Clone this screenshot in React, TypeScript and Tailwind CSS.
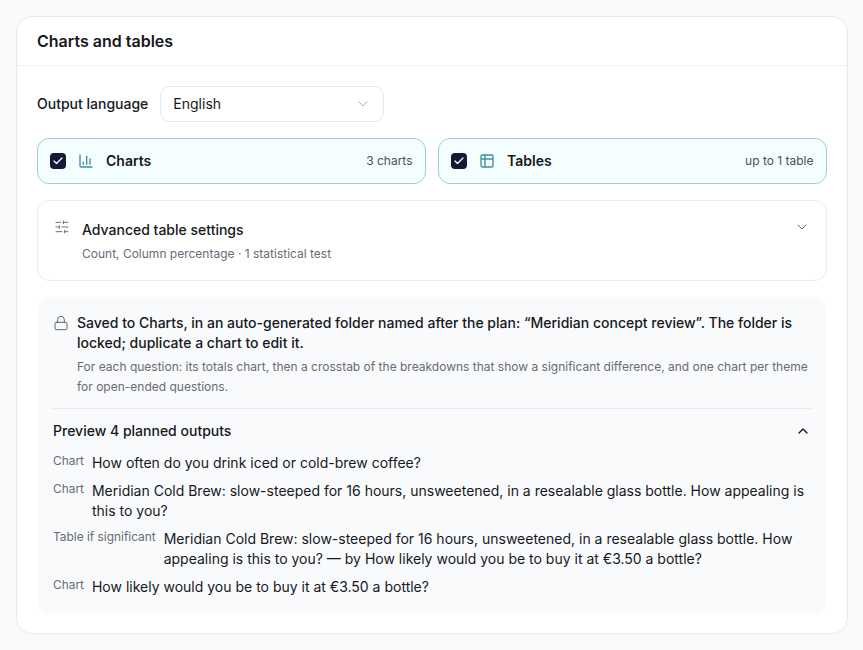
import { Check, ChevronDown, ChevronUp, Lock, SlidersHorizontal, Table2 } from 'lucide-react'
import type { ReactNode } from 'react'

type Output = { kind: string; text: string }

const outputs: Output[] = [
  { kind: 'Chart', text: 'How often do you drink iced or cold-brew coffee?' },
  {
    kind: 'Chart',
    text: 'Meridian Cold Brew: slow-steeped for 16 hours, unsweetened, in a resealable glass bottle. How appealing is this to you?',
  },
  {
    kind: 'Table if significant',
    text: 'Meridian Cold Brew: slow-steeped for 16 hours, unsweetened, in a resealable glass bottle. How appealing is this to you? — by How likely would you be to buy it at €3.50 a bottle?',
  },
  { kind: 'Chart', text: 'How likely would you be to buy it at €3.50 a bottle?' },
]

function BarsIcon() {
  return (
    <svg width="16" height="16" viewBox="0 0 24 24" fill="none" stroke="currentColor" strokeWidth="2" strokeLinecap="round" strokeLinejoin="round">
      <path d="M3 3v16a2 2 0 0 0 2 2h16" />
      <path d="M8 17v-3" />
      <path d="M13 17V5" />
      <path d="M18 17V9" />
    </svg>
  )
}

function OutputToggle({ icon, label, note }: { icon: ReactNode; label: string; note: string }) {
  return (
    <div className="flex h-[46px] items-center rounded-xl border border-[#a3cbd3] bg-[#f5fefe] pl-3 pr-[12.5px]">
      <span className="flex size-4 items-center justify-center rounded-[4px] bg-[#131a35] text-white">
        <Check className="size-3" strokeWidth={2.5} />
      </span>
      <span className="ml-3 text-[#3d8ea3]">{icon}</span>
      <span className="ml-3 text-sm font-semibold text-[#16181d]">{label}</span>
      <span className="ml-auto text-xs text-[#4b5058]">{note}</span>
    </div>
  )
}

export default function App() {
  return (
    <div className="min-h-[650px] bg-[#f8fafc] pb-4 pl-4 pr-[15px] pt-4 font-['Inter',sans-serif]">
      <div className="rounded-2xl border border-[#e7e9ec] bg-white">
        <div className="flex h-[49px] items-center border-b border-[#eff0f2] px-5">
          <h2 className="text-base font-semibold text-[#16181d]">Charts and tables</h2>
        </div>
        <div className="p-5">
          <div className="flex items-center gap-3">
            <span className="text-sm font-medium text-[#16181d]">Output language</span>
            <div className="flex h-9 w-56 items-center justify-between rounded-[10px] border border-[#e7e9ec] px-3">
              <span className="text-sm text-[#16181d]">English</span>
              <ChevronDown className="size-4 text-[#a9adb4]" strokeWidth={1.5} />
            </div>
          </div>

          <div className="mt-4 grid grid-cols-2 gap-3">
            <OutputToggle icon={<BarsIcon />} label="Charts" note="3 charts" />
            <OutputToggle icon={<Table2 size={16} />} label="Tables" note="up to 1 table" />
          </div>

          <div className="mt-4 flex h-[81px] items-start rounded-xl border border-[#ebecef] px-4 pt-[18px]">
            <SlidersHorizontal className="size-4 text-[#6b7079]" strokeWidth={1.5} />
            <div className="ml-3 mt-px">
              <div className="text-sm font-medium leading-5 text-[#16181d]">Advanced table settings</div>
              <div className="mt-[6px] text-xs leading-4 text-[#676c75]">Count, Column percentage · 1 statistical test</div>
            </div>
            <ChevronDown className="ml-auto size-4 text-[#6b7079]" strokeWidth={1.5} />
          </div>

          <div className="mt-4 rounded-xl bg-[#f9fafb] p-4">
            <div className="flex gap-2 border-b border-[#e7e9ec] pb-[11px]">
              <Lock className="mt-0.5 size-4 shrink-0 text-[#5f646d]" strokeWidth={1.5} />
              <div>
                <p className="text-sm font-medium leading-5 text-[#16181d]">
                  Saved to Charts, in an auto-generated folder named after the plan: “Meridian concept review”. The folder is locked; duplicate a chart to edit it.
                </p>
                <p className="mt-1 text-xs leading-5 text-[#676c75]">
                  For each question: its totals chart, then a crosstab of the breakdowns that show a significant difference, and one chart per theme for open-ended questions.
                </p>
              </div>
            </div>

            <div className="mt-3 flex items-center justify-between">
              <span className="text-sm font-medium leading-5 text-[#16181d]">Preview 4 planned outputs</span>
              <ChevronUp className="size-4 text-[#16181d]" strokeWidth={2} />
            </div>

            <ul className="mt-3 flex flex-col gap-2">
              {outputs.map((o, i) => (
                <li key={i} className="flex items-start gap-2">
                  <span className="shrink-0 text-[11.9px] leading-4 text-[#676c75]">{o.kind}</span>
                  <span className="text-sm leading-5 text-[#16181d]">{o.text}</span>
                </li>
              ))}
            </ul>
          </div>
        </div>
      </div>
    </div>
  )
}
